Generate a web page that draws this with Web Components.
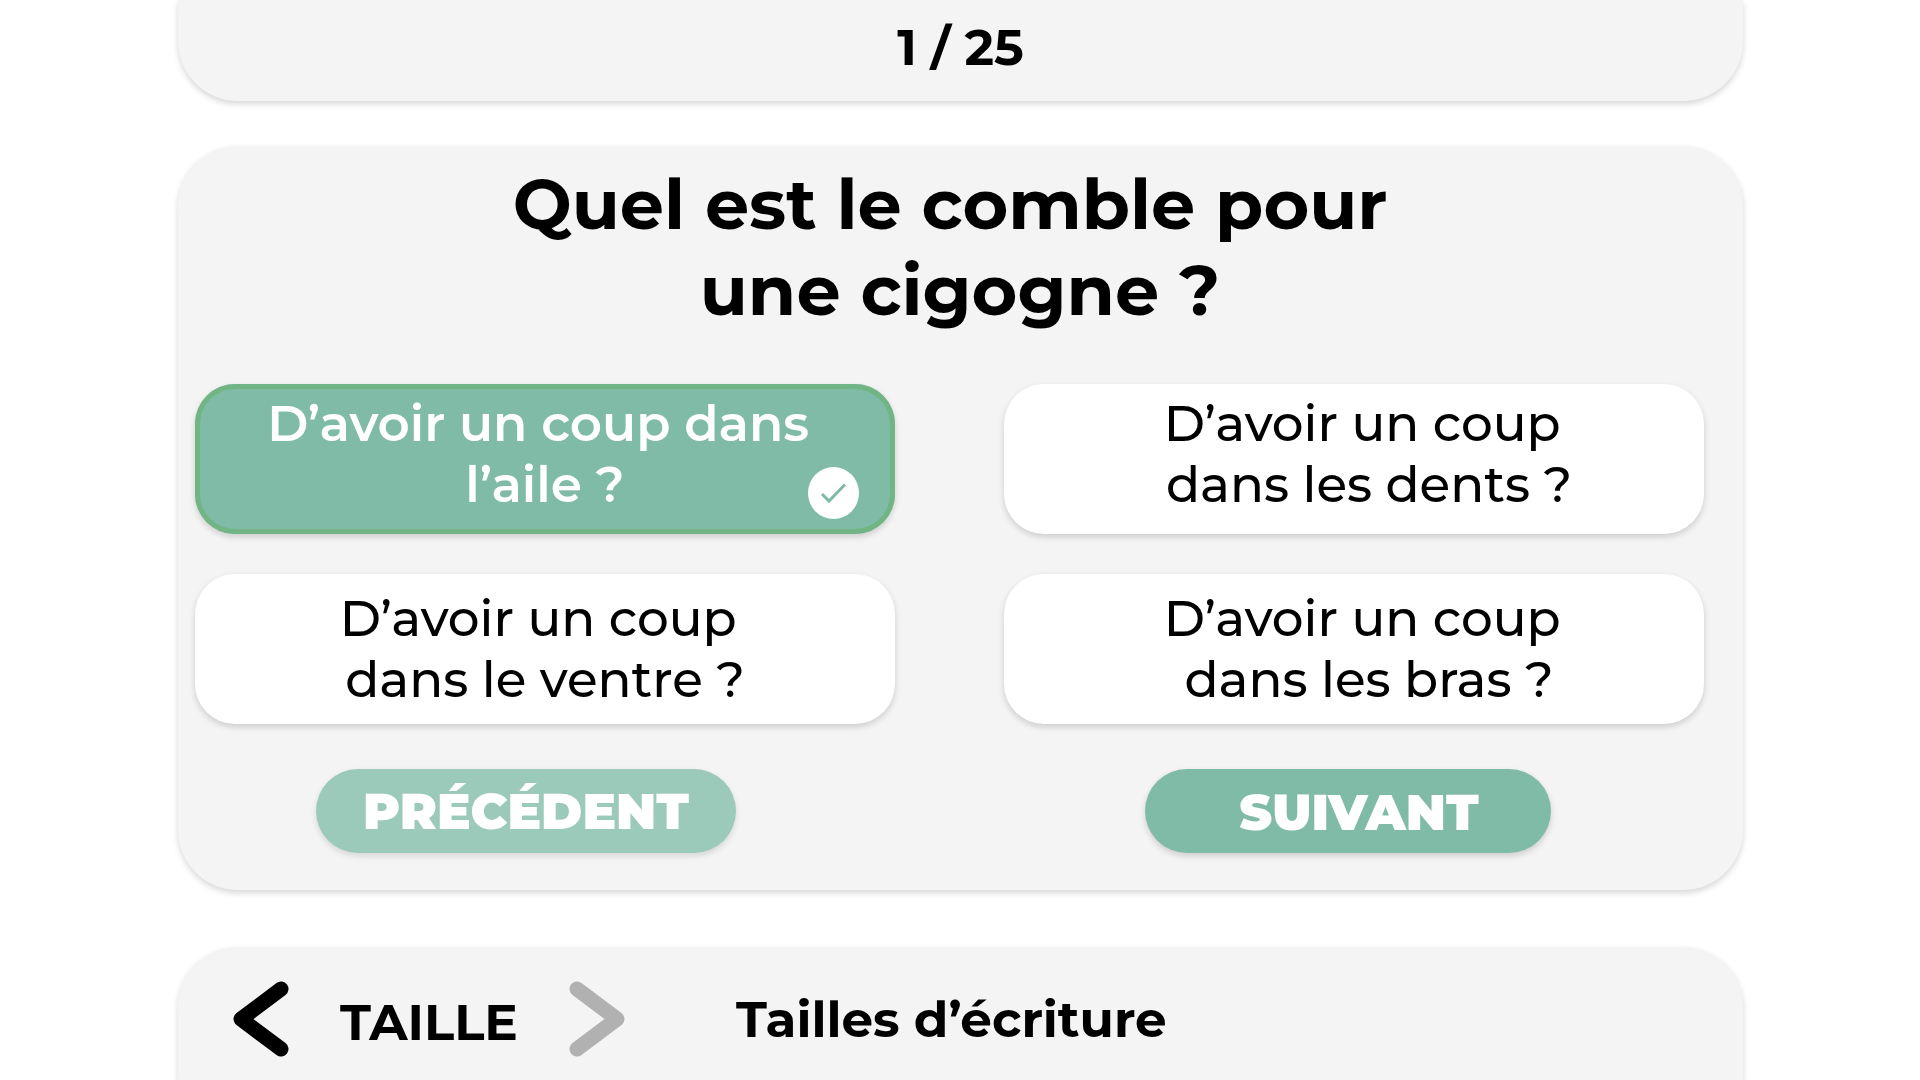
<!DOCTYPE html>
<html lang="fr">
<head>
<meta charset="utf-8">
<meta name="viewport" content="width=device-width, initial-scale=1">
<title>Quiz</title>
<style>
  body {
    margin: 0;
    background: #fff;
    color: #000;
    font-family: Montserrat, Inter, "Open Sans", sans-serif;
    font-size: 50px;
    line-height: 61px;
  }
</style>
</head>
<body>
<quiz-app></quiz-app>
<script>
const define = (name, html, setup) => {
  const template = document.createElement('template');
  template.innerHTML = html;
  customElements.define(name, class extends HTMLElement {
    constructor() {
      super();
      this.attachShadow({ mode: 'open' }).append(template.content.cloneNode(true));
    }
    connectedCallback() { if (setup) setup(this, this.shadowRoot); }
  });
};

define('quiz-panel', `
  <style>
    :host {
      display: block;
      box-sizing: border-box;
      background: #f4f4f4;
      border-radius: 60px;
      box-shadow: 0 3px 6px rgba(0, 0, 0, .16);
    }
  </style>
  <slot></slot>`);

define('quiz-progress', `
  <style>
    :host { display: block; text-align: center; font-weight: 700; }
    p { margin: 0; }
  </style>
  <p><slot></slot></p>`);

define('quiz-question', `
  <style>
    :host { display: block; }
    h1 { margin: 0; font-size: 70px; line-height: 86px; font-weight: 700; text-align: center; }
  </style>
  <h1><slot></slot></h1>`);

define('quiz-answer', `
  <style>
    :host { display: flex; }
    button {
      position: relative;
      flex: 1;
      box-sizing: border-box;
      min-height: 150px;
      padding: var(--answer-padding, 0);
      border: 0;
      border-radius: 40px;
      background: #fff;
      color: inherit;
      font: inherit;
      font-weight: 500;
      text-align: center;
      box-shadow: 0 3px 6px rgba(0, 0, 0, .16);
      cursor: pointer;
    }
    svg { display: none; }
    :host([selected]) button {
      background: #7fbba7;
      box-shadow: inset 0 0 0 5px #71b585, 0 3px 6px rgba(0, 0, 0, .16);
      color: #fff;
      font-weight: 600;
    }
    :host([selected]) svg {
      display: block;
      position: absolute;
      right: 36px;
      bottom: 15px;
    }
  </style>
  <button type="button" aria-pressed="false">
    <slot></slot>
    <svg width="51" height="52" viewBox="0 0 51 52" aria-hidden="true">
      <ellipse cx="25.500" cy="26" rx="25.500" ry="26" fill="#fff"/>
      <path d="M14 27 21 34 37 17.500" fill="none" stroke="#7fbba7" stroke-width="3"/>
    </svg>
  </button>`, (host, root) => {
    root.querySelector('button').setAttribute('aria-pressed', host.hasAttribute('selected'));
  });

define('quiz-button', `
  <style>
    :host { display: block; }
    button {
      width: 100%;
      height: 84px;
      padding: var(--button-padding, 0);
      border: 0;
      border-radius: 42px;
      background: #7fbba7;
      color: #fff;
      font: inherit;
      font-weight: 900;
      box-shadow: 0 3px 6px rgba(0, 0, 0, .16);
      cursor: pointer;
    }
    :host([muted]) button {
      background: #9ccaba;
      box-shadow: 0 3px 6px rgba(0, 0, 0, .12);
    }
  </style>
  <button type="button"><slot></slot></button>`);

define('size-stepper', `
  <style>
    :host { display: flex; align-items: center; gap: 50px; font-weight: 700; }
    button {
      display: block;
      padding: 0;
      border: 0;
      background: none;
      color: #000;
      cursor: pointer;
    }
    button:disabled { color: #b1b1b1; }
    svg { display: block; }
    path { fill: none; stroke: currentColor; stroke-width: 15; stroke-linecap: round; stroke-linejoin: round; }
    span { width: 180px; text-align: center; padding-top: 6px; }
  </style>
  <button type="button" aria-label="Réduire la taille">
    <svg width="56" height="76" viewBox="0 0 56 76"><path d="M48 8 8 38 48 68"/></svg>
  </button>
  <span><slot></slot></span>
  <button type="button" aria-label="Augmenter la taille" disabled>
    <svg width="56" height="76" viewBox="0 0 56 76"><path d="M8 8 48 38 8 68"/></svg>
  </button>`);

define('quiz-app', `
  <style>
    :host {
      display: flex;
      flex-direction: column;
      box-sizing: border-box;
      min-height: 100vh;
      padding: 0 177px 0 178px;
    }
    .top { padding: 17px 0 23px; border-radius: 0 0 60px 60px; }
    .main { margin-top: 45px; padding: 15px 39px 37px 17px; }
    .settings {
      flex: 1;
      margin-top: 57px;
      padding: 34px 55px 0;
      border-radius: 60px 60px 0 0;
    }
    quiz-question { padding-left: 21px; }
    .answers {
      display: grid;
      grid-template-columns: 1fr 1fr;
      gap: 40px 109px;
      margin-top: 51px;
    }
    .first { --answer-padding: 0 0 10px; }
    .right { --answer-padding: 0 0 0 30px; }
    .first.right { --answer-padding: 0 0 10px 30px; }
    nav {
      display: flex;
      justify-content: space-between;
      margin-top: 45px;
      padding: 0 153px 0 121px;
    }
    .previous { width: 420px; }
    .next { width: 406px; --button-padding: 3px 0 0 22px; }
    .row { display: flex; align-items: center; gap: 111px; }
    h2 { margin: 0; font-size: inherit; line-height: inherit; font-weight: 700; }
  </style>
  <quiz-panel class="top"><quiz-progress>1 / 25</quiz-progress></quiz-panel>
  <quiz-panel class="main">
    <quiz-question>Quel est le comble pour&nbsp;<br>une cigogne ?</quiz-question>
    <div class="answers">
      <quiz-answer class="first" selected>D’avoir un coup dans&nbsp;<br>l’aile ?</quiz-answer>
      <quiz-answer class="first right">D’avoir un coup&nbsp;<br>dans les dents ?</quiz-answer>
      <quiz-answer>D’avoir un coup&nbsp;<br>dans le ventre ?</quiz-answer>
      <quiz-answer class="right">D’avoir un coup&nbsp;<br>dans les bras ?</quiz-answer>
    </div>
    <nav>
      <quiz-button class="previous" muted>PRÉCÉDENT</quiz-button>
      <quiz-button class="next">SUIVANT</quiz-button>
    </nav>
  </quiz-panel>
  <quiz-panel class="settings">
    <div class="row">
      <size-stepper>TAILLE</size-stepper>
      <h2>Tailles d’écriture</h2>
    </div>
  </quiz-panel>`);
</script>
</body>
</html>
